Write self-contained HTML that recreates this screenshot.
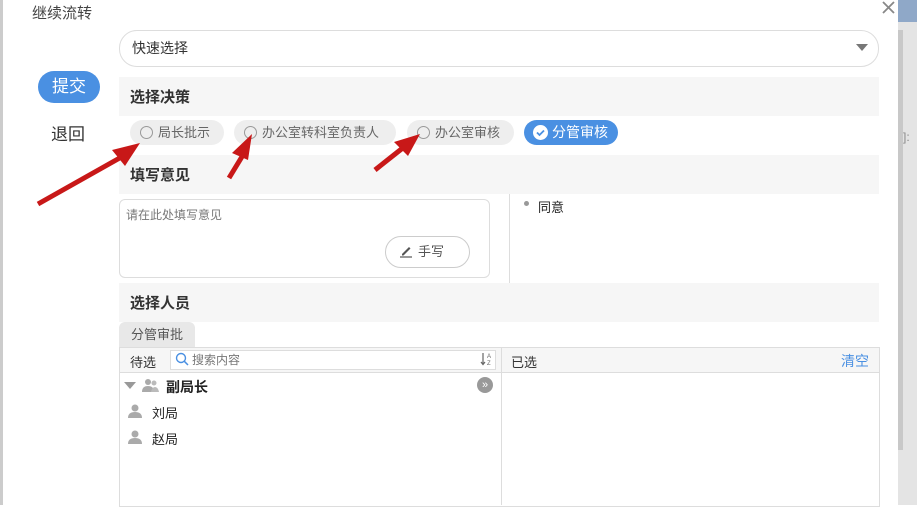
<!DOCTYPE html>
<html><head><meta charset="utf-8"><style>
*{box-sizing:border-box;margin:0;padding:0}
body{width:917px;height:505px;overflow:hidden;background:#fff;font-family:"Liberation Sans","Noto Sans CJK SC",sans-serif;position:relative;color:#333}
.a{position:absolute}
.bar{position:absolute;left:119px;width:760px;background:#f6f6f6;font-size:15px;font-weight:bold;padding-left:11px;color:#333}
.pill{position:absolute;top:120px;height:25px;border-radius:13px;background:#eee;font-size:13px;color:#666;line-height:25px;padding-left:28px}
.pill i{position:absolute;left:10px;top:6px;width:13px;height:13px;border:1px solid #999;border-radius:50%}
</style></head><body>
<div class="a" style="left:0;top:0;width:3px;height:505px;background:#ccc"></div>
<div class="a" style="left:898px;top:0;width:19px;height:505px;background:#e4e4e4"></div>
<div class="a" style="left:898px;top:0;width:19px;height:22px;background:#8fa8c8"></div>
<div class="a" style="left:898px;top:30px;width:5px;height:420px;background:#c8c8c8"></div>
<div class="a" style="left:903px;top:130px;font-size:12px;color:#888;width:14px;overflow:hidden;white-space:nowrap">]:</div>
<div class="a" style="left:32px;top:2px;font-size:15px;color:#444">继续流转</div>
<svg class="a" style="left:882px;top:1px" width="13" height="13"><path d="M1 1L12 12M12 1L1 12" stroke="#888" stroke-width="1.8"/></svg>
<div class="a" style="left:119px;top:30px;width:760px;height:37px;border:1px solid #ddd;border-radius:18px;font-size:14px;line-height:35px;padding-left:12px;color:#333">快速选择</div>
<div class="a" style="left:856px;top:44px;border-left:6px solid transparent;border-right:6px solid transparent;border-top:7px solid #777"></div>
<div class="a" style="left:38px;top:71px;width:62px;height:32px;border-radius:16px;background:#4a90e2;color:#fff;font-size:17px;text-align:center;line-height:32px">提交</div>
<div class="a" style="left:51px;top:120px;font-size:17px;color:#333">退回</div>
<div class="bar" style="top:77px;height:39px;line-height:41px">选择决策</div>
<div class="pill" style="left:130px;width:94px"><i></i>局长批示</div>
<div class="pill" style="left:234px;width:162px"><i></i>办公室转科室负责人</div>
<div class="pill" style="left:407px;width:107px"><i></i>办公室审核</div>
<div class="pill" style="left:524px;width:94px;background:#4a90e2;color:#fff;font-size:14px"><svg class="a" style="left:9px;top:5px" width="15" height="15"><circle cx="7.5" cy="7.5" r="7.5" fill="#fff"/><path d="M4 7.5l2.5 2.5 4.5-4.5" stroke="#4a90e2" stroke-width="1.8" fill="none"/></svg>分管审核</div>
<div class="bar" style="top:155px;height:39px;line-height:41px">填写意见</div>
<div class="a" style="left:119px;top:199px;width:371px;height:79px;border:1px solid #ddd;border-radius:6px;font-size:12px;color:#777;padding:6px 6px">请在此处填写意见</div>
<div class="a" style="left:385px;top:236px;width:85px;height:32px;border:1px solid #ccc;border-radius:16px;font-size:13px;color:#555;line-height:30px;padding-left:32px">手写</div>
<svg class="a" style="left:399px;top:244px" width="14" height="14"><path d="M3 10L10 3l1.5 1.5L4.5 11.5H3z" fill="#555"/><path d="M1 13H13" stroke="#555" stroke-width="1.2"/></svg>
<div class="a" style="left:509px;top:194px;width:1px;height:89px;background:#ddd"></div>
<div class="a" style="left:524px;top:201px;width:5px;height:5px;border-radius:50%;background:#999"></div>
<div class="a" style="left:538px;top:197px;font-size:13px;color:#222">同意</div>
<div class="bar" style="top:283px;height:39px;line-height:41px">选择人员</div>
<div class="a" style="left:119px;top:322px;width:76px;height:26px;background:#e8e8e8;border-radius:6px 6px 0 0;font-size:13px;color:#555;line-height:26px;text-align:center">分管审批</div>
<div class="a" style="left:119px;top:347px;width:761px;height:160px;border:1px solid #ddd"></div>
<div class="a" style="left:120px;top:348px;width:759px;height:25px;background:#f6f6f6;border-bottom:1px solid #ddd"></div>
<div class="a" style="left:501px;top:348px;width:1px;height:157px;background:#ddd"></div>
<div class="a" style="left:130px;top:352px;font-size:13px;color:#333">待选</div>
<div class="a" style="left:170px;top:350px;width:326px;height:20px;background:#fff;border:1px solid #ddd;font-size:12px;color:#777;padding-left:21px;line-height:18px">搜索内容</div>
<svg class="a" style="left:175px;top:352px" width="14" height="14"><circle cx="6" cy="6" r="4.5" stroke="#4a90e2" stroke-width="1.4" fill="none"/><path d="M9.2 9.2L13 13" stroke="#4a90e2" stroke-width="1.5"/></svg>
<svg class="a" style="left:480px;top:352px" width="14" height="14"><path d="M3 1V12M1 10l2 2.5 2-2.5" stroke="#666" stroke-width="1.2" fill="none"/><text x="7" y="6" font-size="6" fill="#666" font-family="Liberation Sans">A</text><text x="7" y="13" font-size="6" fill="#666" font-family="Liberation Sans">Z</text></svg>
<div class="a" style="left:511px;top:352px;font-size:13px;color:#333">已选</div>
<div class="a" style="left:841px;top:351px;font-size:14px;color:#4a90e2">清空</div>
<div class="a" style="left:124px;top:382px;border-left:6px solid transparent;border-right:6px solid transparent;border-top:7px solid #999"></div>
<svg class="a" style="left:142px;top:378px" width="18" height="15"><circle cx="6" cy="4" r="3" fill="#aaa"/><path d="M0 14q0-6 6-6t6 6z" fill="#aaa"/><circle cx="12" cy="5" r="2.5" fill="#bbb"/><path d="M9 14q1-5 4-5t4 5z" fill="#bbb"/></svg>
<div class="a" style="left:166px;top:377px;font-size:14px;font-weight:bold;color:#222">副局长</div>
<div class="a" style="left:477px;top:377px;width:16px;height:16px;border-radius:50%;background:#999;color:#fff;font-size:11px;text-align:center;line-height:16px">»</div>
<svg class="a" style="left:128px;top:404px" width="14" height="14"><circle cx="7" cy="4" r="3.5" fill="#aaa"/><path d="M0 14q0-6 7-6t7 6z" fill="#aaa"/></svg>
<div class="a" style="left:152px;top:403px;font-size:13px;color:#222">刘局</div>
<svg class="a" style="left:128px;top:430px" width="14" height="14"><circle cx="7" cy="4" r="3.5" fill="#aaa"/><path d="M0 14q0-6 7-6t7 6z" fill="#aaa"/></svg>
<div class="a" style="left:152px;top:429px;font-size:13px;color:#222">赵局</div>
<svg class="a" style="left:0;top:0" width="917" height="505">
<g stroke="#c81818" stroke-width="5" fill="#c81818">
<line x1="38" y1="204" x2="125" y2="155"/><polygon points="140,143 112,150 125,166" stroke="none"/>
<line x1="229" y1="178" x2="243" y2="155"/><polygon points="252,134 232,153 248,160" stroke="none"/>
<line x1="375" y1="170" x2="404" y2="147"/><polygon points="420,134 394,142 408,156" stroke="none"/>
</g></svg>
</body></html>
